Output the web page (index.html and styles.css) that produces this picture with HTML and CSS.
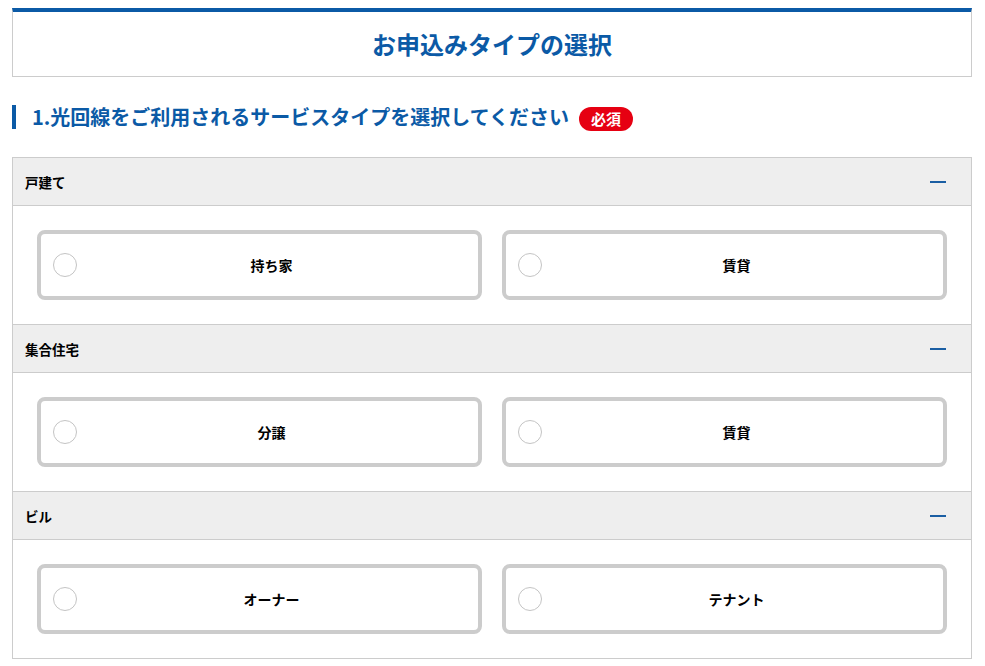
FILE: index.html
```html
<!DOCTYPE html>
<html lang="ja">
<head>
<meta charset="utf-8">
<title>お申込みタイプの選択</title>
<link rel="stylesheet" href="styles.css">
</head>
<body>
<div class="page">
  <div class="title-box"><h1 class="title">お申込みタイプの選択</h1></div>
  <h2 class="q-heading"><span class="q-text">1.光回線をご利用されるサービスタイプを選択してください</span><span class="badge">必須</span></h2>
  <div class="accordion">
    <div class="acc-head"><span class="acc-label">戸建て</span><span class="minus"></span></div>
    <div class="acc-body">
      <label class="opt"><span class="radio"></span><span class="opt-label">持ち家</span></label>
      <label class="opt"><span class="radio"></span><span class="opt-label">賃貸</span></label>
    </div>
    <div class="acc-head"><span class="acc-label">集合住宅</span><span class="minus"></span></div>
    <div class="acc-body">
      <label class="opt"><span class="radio"></span><span class="opt-label">分譲</span></label>
      <label class="opt"><span class="radio"></span><span class="opt-label">賃貸</span></label>
    </div>
    <div class="acc-head"><span class="acc-label">ビル</span><span class="minus"></span></div>
    <div class="acc-body last">
      <label class="opt"><span class="radio"></span><span class="opt-label">オーナー</span></label>
      <label class="opt"><span class="radio"></span><span class="opt-label">テナント</span></label>
    </div>
  </div>
</div>
</body>
</html>
```
FILE: styles.css
```css
* { box-sizing: border-box; }
html, body { margin: 0; padding: 0; background: #fff; }
body {
  font-family: "Noto Sans CJK JP", "Noto Sans", sans-serif;
  color: #000;
}
.page {
  width: 960px;
  margin: 0 0 0 12px;
  padding-top: 8px;
}
.title-box {
  border-top: 4px solid #0b5aa6;
  border-left: 1px solid #cccccc;
  border-right: 1px solid #cccccc;
  border-bottom: 1px solid #cccccc;
  height: 69px;
  display: flex;
  align-items: center;
  justify-content: center;
}
.title {
  margin: 0;
  font-size: 24px;
  font-weight: 700;
  color: #0b5aa6;
  line-height: 1;
}
.q-heading {
  margin: 28px 0 0 0;
  display: flex;
  align-items: center;
  border-left: 4px solid #0b5aa6;
  padding-left: 16px;
  height: 24px;
  font-size: 20px;
  font-weight: 700;
  color: #0b5aa6;
  line-height: 24px;
}
.badge {
  margin-left: 10px;
  margin-top: 3px;
  background: #e60012;
  color: #fff;
  font-size: 15px;
  font-weight: 700;
  line-height: 24px;
  height: 24px;
  padding: 0 12px;
  border-radius: 12px;
}
.accordion {
  margin-top: 28px;
  border: 1px solid #cccccc;
}
.acc-head {
  height: 48px;
  background: #eeeeee;
  border-bottom: 1px solid #cccccc;
  display: flex;
  align-items: center;
  justify-content: space-between;
  padding: 0 25px 0 12px;
}
.acc-label {
  font-size: 13.5px;
  font-weight: 700;
}
.minus {
  width: 16px;
  height: 2px;
  background: #1a5ea3;
}
.acc-body {
  height: 119px;
  border-bottom: 1px solid #cccccc;
  padding: 24px;
  display: grid;
  grid-template-columns: 1fr 1fr;
  column-gap: 20px;
}
.acc-body.last { border-bottom: none; height: 118px; }
.opt {
  height: 70px;
  border: 4px solid #cccccc;
  border-radius: 8px;
  background: #fff;
  display: flex;
  align-items: center;
  padding: 0 12px;
}
.radio {
  width: 24px;
  height: 24px;
  border: 1px solid #c4c4c4;
  border-radius: 50%;
  flex: none;
  background: #fff;
}
.opt-label {
  flex: 1;
  text-align: center;
  font-size: 14px;
  font-weight: 700;
}
```
